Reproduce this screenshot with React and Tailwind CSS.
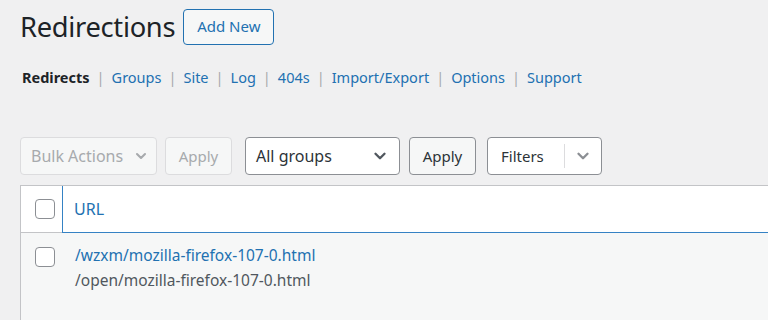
import React from 'react';

const Chevron = ({ className = '' }) => (
  <svg viewBox="0 0 20 20" className={className} fill="none" stroke="currentColor" strokeWidth="2.6" strokeLinecap="round" strokeLinejoin="round">
    <path d="M5 7.5l5 5 5-5" />
  </svg>
);

const Sep = () => <span className="text-[#a7aaad] px-[7px]">|</span>;

const App = () => {
  const tabs = ['Groups', 'Site', 'Log', '404s', 'Import/Export', 'Options', 'Support'];

  return (
    <div className="w-[768px] h-[320px] overflow-hidden bg-[#f0f0f1] text-[#3c434a] font-['Noto_Sans',sans-serif]">
      <div className="pl-[20px] pt-[8px]">
        {/* Title */}
        <div className="flex items-center gap-[8px] h-[37px]">
          <h1 className="text-[27.3px] leading-[37px] text-[#1d2327] tracking-[-0.3px]">Redirections</h1>
          <button className="h-[36px] px-[13px] rounded-[4px] border border-[#2271b1] bg-[#f6f7f7] text-[#2271b1] text-[15px]">
            Add New
          </button>
        </div>

        {/* Sub nav */}
        <div className="mt-[21px] pl-[2px] flex items-center text-[14.5px] leading-[22px]">
          <span className="font-bold text-[#1d2327]">Redirects</span>
          {tabs.map((t) => (
            <React.Fragment key={t}>
              <Sep />
              <a className="text-[#2271b1]">{t}</a>
            </React.Fragment>
          ))}
        </div>

        {/* Toolbar */}
        <div className="mt-[49px] flex items-center h-[38px] text-[15px]">
          <div className="w-[137px] h-[38px] flex items-center justify-between pl-[10px] pr-[7px] rounded-[4px] border border-[#dcdcde] bg-[#f6f7f7] text-[#a7aaad] text-[16px]">
            <span>Bulk Actions</span>
            <Chevron className="w-[16px] h-[16px]" />
          </div>
          <div className="ml-[8px] w-[67px] h-[38px] flex items-center justify-center rounded-[4px] border border-[#dcdcde] bg-[#f6f7f7] text-[#a7aaad]">
            Apply
          </div>
          <div className="ml-[13px] w-[155px] h-[38px] flex items-center justify-between pl-[10px] pr-[10px] rounded-[4px] border border-[#8c8f94] bg-white text-[#2c3338] text-[16px]">
            <span>All groups</span>
            <Chevron className="w-[18px] h-[18px] text-[#50575e]" />
          </div>
          <div className="ml-[9px] w-[67px] h-[38px] flex items-center justify-center rounded-[4px] border border-[#8c8f94] bg-[#f6f7f7] text-[#2c3338]">
            Apply
          </div>
          <div className="ml-[11px] w-[115px] h-[38px] flex items-center rounded-[4px] border border-[#8c8f94] bg-white text-[#2c3338]">
            <span className="w-[76px] pl-[13px]">Filters</span>
            <span className="w-px h-[24px] bg-[#dcdcde]" />
            <span className="flex-1 flex justify-center">
              <Chevron className="w-[18px] h-[18px] text-[#8c8f94]" />
            </span>
          </div>
        </div>

        {/* Table */}
        <div className="mt-[10px] border-t border-l border-[#c3c4c7]">
          <div className="flex h-[47px] bg-white">
            <div className="w-[41px] flex items-center justify-end pr-[7px] border-b border-[#c3c4c7]">
              <span className="w-[20px] h-[20px] rounded-[4px] border border-[#8c8f94] bg-white" />
            </div>
            <div className="flex-1 flex items-center pl-[11px] border-l border-b border-[#3582c4] text-[#2271b1] text-[16px]">
              URL
            </div>
          </div>
          <div className="flex bg-[#f6f7f7] h-[100px]">
            <div className="w-[41px] flex justify-end pr-[7px] pt-[14px]">
              <span className="w-[20px] h-[20px] rounded-[4px] border border-[#8c8f94] bg-white" />
            </div>
            <div className="pl-[13px] pt-[10px] text-[15.5px] leading-[25px]">
              <div className="text-[#2271b1]">/wzxm/mozilla-firefox-107-0.html</div>
              <div className="text-[#50575e]">/open/mozilla-firefox-107-0.html</div>
            </div>
          </div>
        </div>
      </div>
    </div>
  );
};

export default App;
